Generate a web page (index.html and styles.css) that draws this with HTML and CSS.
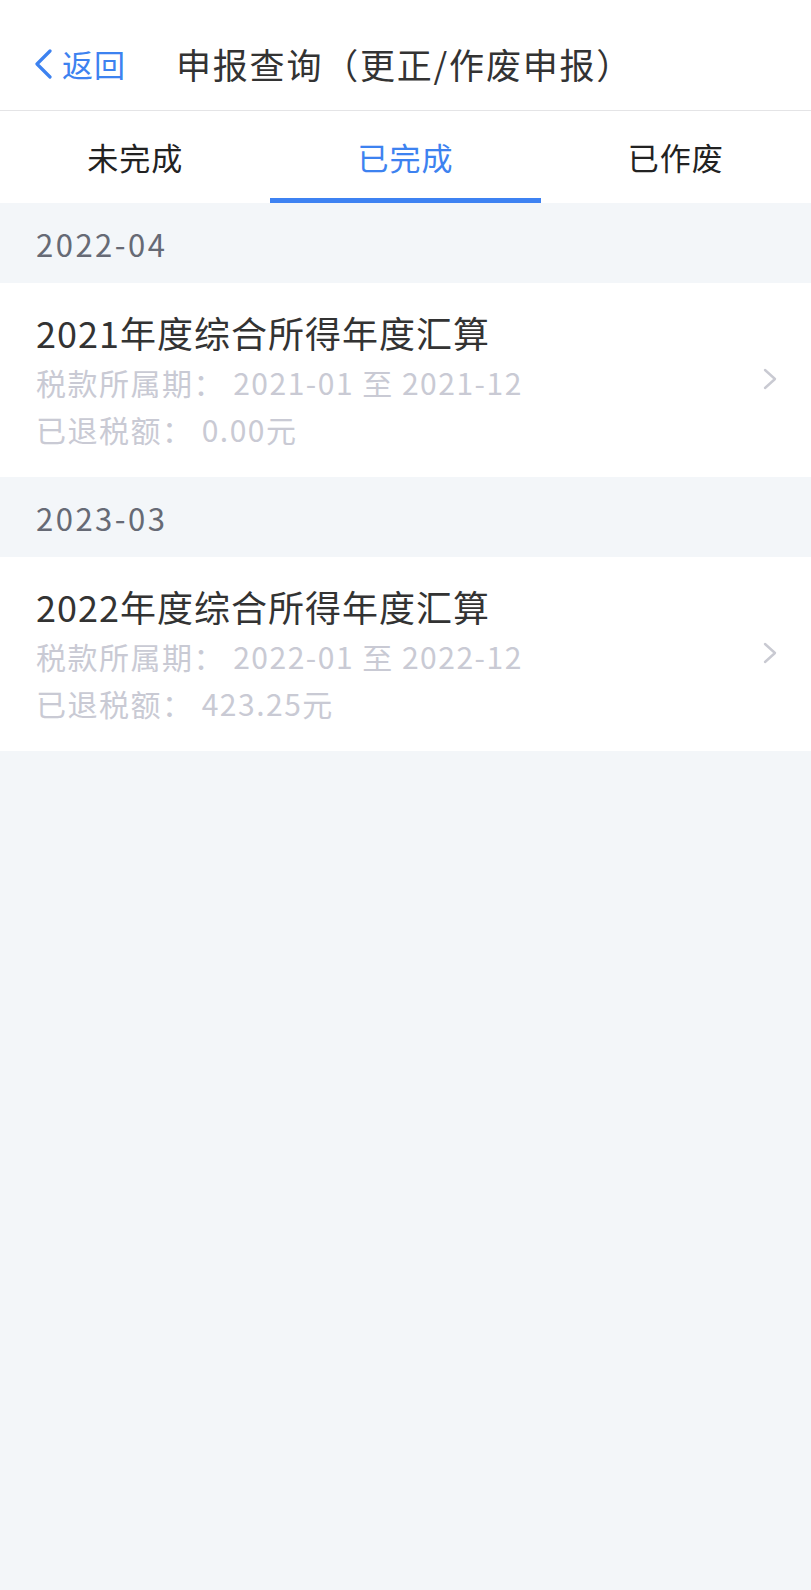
FILE: index.html
```html
<!DOCTYPE html>
<html lang="zh-CN">
<head>
<meta charset="utf-8">
<title>申报查询</title>
<link rel="stylesheet" href="styles.css">
</head>
<body>
<div class="page">
  <header class="nav">
    <a class="back">
      <svg class="back-icon" viewBox="0 0 20 30" width="20" height="30"><path d="M17 2 L4 15 L17 28" fill="none" stroke="#3d82f0" stroke-width="3.2" stroke-linecap="round" stroke-linejoin="round"/></svg>
      <span class="back-text">返回</span>
    </a>
    <h1 class="nav-title">申报查询（更正/作废申报）</h1>
  </header>
  <nav class="tabs">
    <div class="tab">未完成</div>
    <div class="tab active">已完成</div>
    <div class="tab">已作废</div>
  </nav>
  <section class="group">
    <div class="group-head">2022-04</div>
    <div class="item">
      <div class="item-body">
        <div class="item-title">2021年度综合所得年度汇算</div>
        <div class="item-sub">税款所属期： 2021-01 至 2021-12</div>
        <div class="item-sub">已退税额： 0.00元</div>
      </div>
      <svg class="arrow" viewBox="0 0 14 22" width="14" height="22"><path d="M2 2 L12 11 L2 20" fill="none" stroke="#c9cad2" stroke-width="2.4" stroke-linecap="round" stroke-linejoin="round"/></svg>
    </div>
  </section>
  <section class="group">
    <div class="group-head">2023-03</div>
    <div class="item">
      <div class="item-body">
        <div class="item-title">2022年度综合所得年度汇算</div>
        <div class="item-sub">税款所属期： 2022-01 至 2022-12</div>
        <div class="item-sub">已退税额： 423.25元</div>
      </div>
      <svg class="arrow" viewBox="0 0 14 22" width="14" height="22"><path d="M2 2 L12 11 L2 20" fill="none" stroke="#c9cad2" stroke-width="2.4" stroke-linecap="round" stroke-linejoin="round"/></svg>
    </div>
  </section>
</div>
</body>
</html>
```
FILE: styles.css
```css
* { box-sizing: border-box; }
html, body {
  margin: 0;
  padding: 0;
  background: #f3f6f9;
  font-family: "Noto Sans CJK SC", "Noto Sans", sans-serif;
}
.page {
  width: 811px;
  min-height: 1590px;
  background: #f3f6f9;
}
.nav {
  height: 111px;
  background: #fff;
  border-bottom: 1px solid #e4e4e6;
  display: flex;
  align-items: center;
  padding: 18px 0 0 33px;
}
.back {
  display: flex;
  align-items: center;
  gap: 9px;
  color: #3d82f0;
}
.back-icon { display: block; }
.back-text {
  font-size: 31px;
  line-height: 40px;
  letter-spacing: 1px;
}
.nav-title {
  margin: 0 0 0 50px;
  font-weight: normal;
  font-size: 35px;
  line-height: 44px;
  letter-spacing: 1.8px;
  color: #333;
}
.tabs {
  display: flex;
  height: 92px;
  background: #fff;
}
.tab {
  flex: 1;
  display: flex;
  align-items: center;
  justify-content: center;
  padding-top: 4px;
  font-size: 31px;
  letter-spacing: 1px;
  color: #222;
  border-bottom: 5px solid transparent;
}
.tab.active {
  color: #3d82f0;
  border-bottom-color: #3e82f2;
}
.group-head {
  height: 80px;
  display: flex;
  align-items: center;
  padding: 0 0 0 36px;
  font-size: 31px;
  letter-spacing: 2.5px;
  color: #666a75;
}
.item {
  display: flex;
  align-items: center;
  background: #fff;
  padding: 22px 36px 24px 36px;
}
.item-body { flex: 1; }
.item-title {
  font-size: 36px;
  line-height: 54px;
  letter-spacing: 1px;
  color: #333;
}
.item-sub {
  font-size: 30px;
  line-height: 47px;
  letter-spacing: 1.5px;
  color: #c9cad4;
}
.arrow {
  display: block;
  margin-right: -2px;
}
```
